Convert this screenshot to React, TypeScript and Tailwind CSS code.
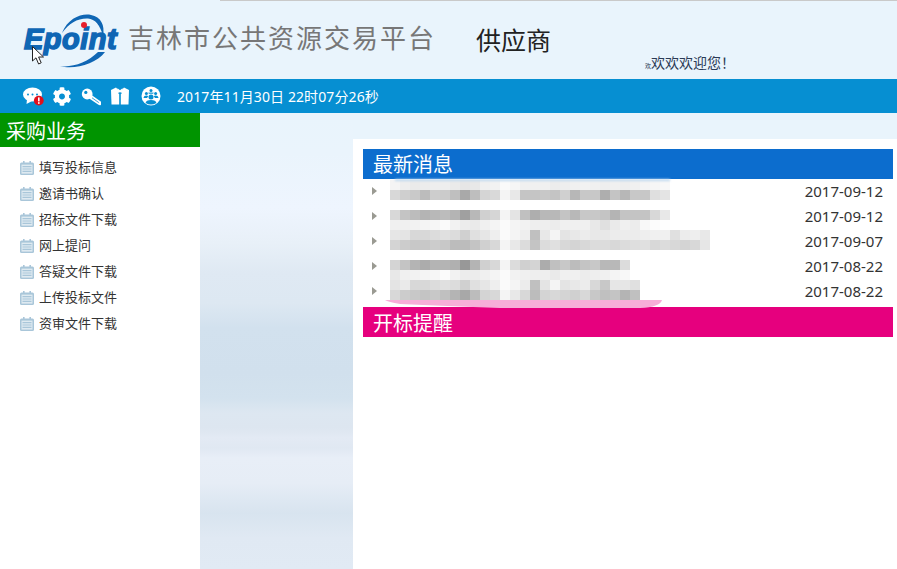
import { FaCog } from 'react-icons/fa'

const menuItems = ['填写投标信息', '邀请书确认', '招标文件下载', '网上提问', '答疑文件下载', '上传投标文件', '资审文件下载']

// the news titles are pixelated in the picture, one string of grey levels per 10px line
const newsRows = [
  {
    date: '2017-09-12',
    top: 'top-[1px]',
    lines: [
      'f4 ee ea ec ee ee ea e6 e8 f0 f2 fa f6 f0 f0 f0 ec ee f0 f2 f0 ee f0 ee f0 f4 f6 f8',
      'd8 cf c9 bc cd cb bf a9 be d5 d9 f4 e8 c5 c5 c8 c4 d0 b7 c8 c8 ae c4 b7 c8 c7 df e4',
    ],
  },
  {
    date: '2017-09-12',
    top: 'top-[6px]',
    lines: [
      'd8 c4 bc b4 b8 bc b4 a0 b8 d0 d6 f4 e4 c0 ae b8 b8 c4 b8 c8 c8 c4 b4 c4 c4 c4 d8 e8',
      'f0 f0 f2 f4 f6 fa f2 ec ea f0 f4 fa f4 f2 ee ee ec f0 f0 f0 e8 e0 ea f0 ec f8 fc fe',
    ],
  },
  {
    date: '2017-09-07',
    top: 'top-[1px]',
    lines: [
      'e6 e4 d8 d8 dc e0 dc d0 e0 e6 ee fa f4 ee c0 e8 f4 e4 e8 ec e8 e8 ec ec ec ee f0 f0 e0 ec ee e8',
      'd4 cc c8 c8 cc c8 bc bc c4 d0 d8 f4 e8 dc c4 dc e0 d8 d4 d8 dc dc d8 dc de e0 d8 dc d8 d4 d8 e6',
    ],
  },
  {
    date: '2017-08-22',
    top: 'top-[6px]',
    lines: [
      'd4 c4 b4 ac b4 b4 b0 98 b4 d0 d8 f4 dc d0 d4 ac c0 c8 bc c4 c8 b8 b8 dc',
      'e8 f0 f2 f4 f6 fb f2 ec ec f0 f4 fa f2 f0 ee ee ea f0 f0 ec ee f0 f4 f8',
    ],
  },
  {
    date: '2017-08-22',
    top: 'top-[1px]',
    lines: [
      'e4 ea d8 d8 dc e0 dc d0 e0 e6 ee fa f4 ec c0 e4 f4 e4 e8 ec d8 c8 e6 e6 e0',
      'd8 cc c8 c4 c8 c0 b4 a8 bc d4 d8 f4 e8 d8 bc d4 d8 d4 d0 d8 c8 c0 c4 b4 c0',
    ],
  },
]

function Mosaic({ lines }: { lines: string[] }) {
  return (
    <div>
      {lines.map((line, i) => (
        <div key={i} className="flex h-[10px]">
          {line.split(' ').map((g, j) => (
            <div key={j} className="h-[10px] w-[10px]" style={{ backgroundColor: `#${g}${g}${g}` }} />
          ))}
        </div>
      ))}
    </div>
  )
}

function ChatIcon() {
  return (
    <svg viewBox="0 0 21 20" className="h-5 w-[21px]">
      <ellipse cx="9.5" cy="8.5" rx="9.5" ry="7" fill="#fff" />
      <path d="M4 13 L3.5 18 L10 14.5 Z" fill="#fff" />
      <circle cx="5" cy="8.5" r="1" fill="#068fd2" />
      <circle cx="9.5" cy="8.5" r="1" fill="#068fd2" />
      <circle cx="14" cy="8.5" r="1" fill="#068fd2" />
      <circle cx="15.8" cy="14.6" r="4.9" fill="#e0101c" />
      <rect x="15" y="11.4" width="1.6" height="4" fill="#fff" />
      <rect x="15" y="16.2" width="1.6" height="1.6" fill="#fff" />
    </svg>
  )
}

function KeyIcon() {
  return (
    <svg viewBox="0 0 20 20" className="h-5 w-5">
      <circle cx="6.2" cy="8" r="5.4" fill="#fff" />
      <circle cx="4.8" cy="6.4" r="1.6" fill="#068fd2" />
      <path d="M9 10.5 L18.6 17.2" stroke="#fff" strokeWidth="4" strokeLinecap="round" />
      <path d="M11 11.8 L17.8 16.6" stroke="#068fd2" strokeWidth="0.8" />
    </svg>
  )
}

function ShirtIcon() {
  return (
    <svg viewBox="0 0 20 20" className="h-5 w-5">
      <path d="M1 4 L6 1.5 L9.2 5 V18.5 H1.5 Z" fill="#fff" />
      <path d="M19 4 L14 1.5 L10.8 5 V18.5 H18.5 Z" fill="#fff" />
      <path d="M7.5 2.2 L10 4.2 L12.5 2.2 L13 6.4 H7 Z" fill="#fff" />
      <rect x="8.4" y="6.6" width="3.2" height="1.2" fill="#068fd2" />
    </svg>
  )
}

function PeopleIcon() {
  return (
    <svg viewBox="0 0 20 20" className="h-5 w-5">
      <circle cx="10" cy="10" r="9.5" fill="#fff" />
      <circle cx="5.4" cy="7.4" r="1.5" fill="#068fd2" />
      <circle cx="14.6" cy="7.4" r="1.5" fill="#068fd2" />
      <circle cx="10" cy="4.4" r="1.5" fill="#068fd2" />
      <circle cx="10" cy="11" r="2.5" fill="#068fd2" />
      <path d="M4.6 17 Q5 14 10 14 Q15 14 15.4 17 Q10 20 4.6 17 Z" fill="#068fd2" />
      <path d="M2.4 12 Q3 9.6 5.4 9.6 Q6.6 9.6 7.2 10.2 L6 12 Z" fill="#068fd2" />
      <path d="M17.6 12 Q17 9.6 14.6 9.6 Q13.4 9.6 12.8 10.2 L14 12 Z" fill="#068fd2" />
      <path d="M7 6.8 Q8 6.4 10 6.4 Q12 6.4 13 6.8 L12 7.8 H8 Z" fill="#068fd2" />
    </svg>
  )
}

function NoteIcon() {
  return (
    <svg viewBox="0 0 14 14" className="-mt-px h-[14px] w-[14px] shrink-0">
      <rect x="0" y="1.5" width="14" height="12.5" rx="1.5" fill="#a9c6d9" />
      <rect x="3" y="0" width="1.6" height="3" fill="#a9c6d9" />
      <rect x="9.4" y="0" width="1.6" height="3" fill="#a9c6d9" />
      <rect x="1.5" y="3.6" width="11" height="9" fill="#dfeaf1" />
      <path d="M2.5 5.6 H11.5 M2.5 8 H11.5 M2.5 10.4 H11.5" stroke="#a9c6d9" strokeWidth="1.2" />
    </svg>
  )
}

function Logo() {
  return (
    <div className="relative h-[60px] w-[105px] shrink-0">
      <svg viewBox="0 0 105 60" className="absolute left-0 top-0 h-[60px] w-[105px]">
        <path d="M38 23 C44 8 58 3 67 5 C77 7 81 15 79 26 C76 15 71 9 64 8.5 C54 8 45 13 38 23 Z" fill="#0f66b4" />
        <path d="M36 56 C50 60 72 54 81 42 L74 42 C64 52 48 58 36 56 Z" fill="#0f66b4" />
      </svg>
      <span className="absolute left-[0px] top-[10px] font-['Liberation_Sans',sans-serif] text-[29px] font-bold italic leading-[38px] tracking-[0.5px] text-[#0f66b4] [-webkit-text-stroke:1.5px_#0f66b4]">
        Epoint
      </span>
      <svg viewBox="0 0 6 6" className="absolute left-[57px] top-[12px] h-[6px] w-[6px]">
        <circle cx="3" cy="3" r="3" fill="#e8202c" />
      </svg>
    </div>
  )
}

export default function App() {
  return (
    <div className="flex h-[569px] w-[897px] flex-col overflow-hidden bg-white font-['Noto_Sans','Noto_Sans_CJK_SC',sans-serif]">
      <div className="relative flex h-[79px] shrink-0 items-center bg-[#e9f4fc] pl-[24px]">
        <div className="absolute right-0 top-0 h-px w-[677px] bg-[#c9c9c9]" />
        <Logo />
        <div className="-ml-[1px] -mt-[4px] w-[348px] text-[26px] leading-[36px] tracking-[2px] text-[#777]">吉林市公共资源交易平台</div>
        <div className="mt-[1px] text-[25px] leading-[36px] text-[#222]">供应商</div>
        <div className="mb-[8px] ml-[94px] flex items-baseline self-end whitespace-nowrap text-[14px] leading-[16px] text-[#2b3a55]">
          <span className="w-[6px] overflow-visible text-[6px] leading-[8px]">欢</span>
          <span>欢欢欢迎您！</span>
        </div>
        {/* mouse pointer caught in the screenshot */}
        <svg viewBox="0 0 13 19" className="absolute left-[32px] top-[46px] h-[19px] w-[13px]">
          <path d="M0.5 0.5 V15 L4 11.8 L6.6 18 L9.2 16.8 L6.6 11 H11.5 Z" fill="#fff" stroke="#222" strokeWidth="1" />
        </svg>
      </div>

      <div className="flex h-[34px] shrink-0 items-center bg-[#068fd2] pl-[23px] text-white">
        <div className="flex items-center gap-[9px]">
          <ChatIcon />
          <FaCog className="-ml-[1px] h-[19px] w-5 text-white" />
          <KeyIcon />
          <ShirtIcon />
          <div className="ml-[2px]">
            <PeopleIcon />
          </div>
        </div>
        <span className="ml-[16px] text-[14px] tracking-[0.1px]">2017年11月30日 22时07分26秒</span>
      </div>

      <div className="flex min-h-0 flex-1">
        <div className="w-[200px] shrink-0 bg-white">
          <div className="flex h-[34px] items-center bg-[#009400] pl-[6px] pt-[3px] text-[20px] text-white">采购业务</div>
          <ul className="pt-[8px]">
            {menuItems.map((item) => (
              <li key={item} className="flex h-[26px] items-center gap-[5px] pl-[20px] text-[13px] text-[#333]">
                <NoteIcon />
                {item}
              </li>
            ))}
          </ul>
        </div>

        <div className="w-[153px] shrink-0 bg-[linear-gradient(180deg,#e9f4fc_0px,#eaf4fc_40px,#eef5fe_95px,#e8f0f8_130px,#dfe9f3_160px,#dde8f2_190px,#d2e1ee_215px,#d1e0ed_260px,#d3e2ee_285px,#dde7f1_300px,#dde6f0_315px,#e3eaf4_325px,#e0e8f2_335px,#e8eef7_345px,#e6edf6_370px,#d8e4ef_400px,#e0e9f3_425px,#e1eaf4_456px)]" />

        <div className="flex min-w-0 flex-1 flex-col bg-white">
          <div className="h-[26px] shrink-0 bg-[#e9f4fc]" />
          <div className="pl-[10px] pr-[4px] pt-[10px]">
            <div className="flex h-[30px] items-center bg-[#0c6dce] pl-[10px] pt-[2px] text-[20px] text-white">最新消息</div>
            <div className="relative z-10 h-[2px] w-[275px] translate-x-[32px] bg-[#bcd8f0] blur-[1px]" />
            <ul className="-mt-[2px]">
              {newsRows.map((row, i) => (
                <li key={i} className="relative flex h-[25px] items-center justify-end pr-[10px] text-[15px] text-[#333]">
                  <svg viewBox="0 0 5 8" className="absolute left-[9px] top-[8px] h-[8px] w-[5px]">
                    <path d="M0 0 L5 4 L0 8 Z" fill="#9a9a92" />
                  </svg>
                  <div className={`absolute left-[27px] ${row.top}`}>
                    <Mosaic lines={row.lines} />
                  </div>
                  {row.date}
                </li>
              ))}
            </ul>
            <div className="relative mt-[3px] flex h-[30px] items-center bg-[#e6007e] pl-[10px] pt-[3px] text-[20px] text-white">
              开标提醒
              <svg viewBox="0 0 280 8" className="absolute -top-[7px] left-[22px] h-[8px] w-[280px] blur-[0.5px]">
                <path d="M0 0 H277 Q275 7 255 8 H115 Q60 6 15 4 Q3 2 0 0 Z" fill="#f7aed8" />
              </svg>
            </div>
          </div>
        </div>
      </div>
    </div>
  )
}
